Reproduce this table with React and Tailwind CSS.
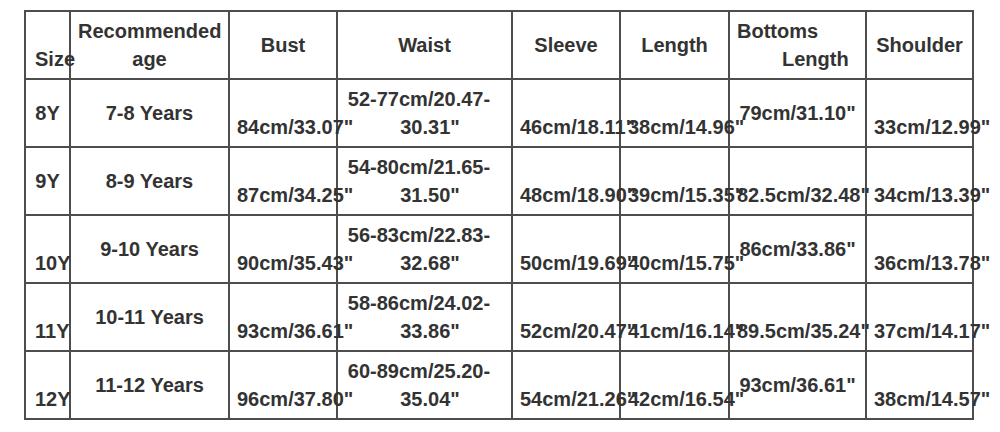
import React from 'react';

// c = centred in the cell, b = sits on the second line (as if a <br> came first)
const rows = [
    { size: ['8Y', 'c'], age: '7-8 Years', bust: '84cm/33.07"', waist: ['52-77cm/20.47-', '30.31"'], sleeve: '46cm/18.11"', length: '38cm/14.96"', bottoms: ['79cm/31.10"', 'c'], shoulder: '33cm/12.99"' },
    { size: ['9Y', 'c'], age: '8-9 Years', bust: '87cm/34.25"', waist: ['54-80cm/21.65-', '31.50"'], sleeve: '48cm/18.90"', length: '39cm/15.35"', bottoms: ['82.5cm/32.48"', 'b'], shoulder: '34cm/13.39"' },
    { size: ['10Y', 'b'], age: '9-10 Years', bust: '90cm/35.43"', waist: ['56-83cm/22.83-', '32.68"'], sleeve: '50cm/19.69"', length: '40cm/15.75"', bottoms: ['86cm/33.86"', 'c'], shoulder: '36cm/13.78"' },
    { size: ['11Y', 'b'], age: '10-11 Years', bust: '93cm/36.61"', waist: ['58-86cm/24.02-', '33.86"'], sleeve: '52cm/20.47"', length: '41cm/16.14"', bottoms: ['89.5cm/35.24"', 'b'], shoulder: '37cm/14.17"' },
    { size: ['12Y', 'b'], age: '11-12 Years', bust: '96cm/37.80"', waist: ['60-89cm/25.20-', '35.04"'], sleeve: '54cm/21.26"', length: '42cm/16.54"', bottoms: ['93cm/36.61"', 'c'], shoulder: '38cm/14.57"' },
];

const Cell = ({ low, left, narrow, children }) => (
    <div className={`border-r-2 border-b-2 border-[#4d4d4d] flex flex-col justify-center whitespace-nowrap ${narrow ? 'px-[9px]' : 'px-[7px]'} ${left ? 'text-left' : 'text-center'}`}>
        {low && <div className="h-7" />}
        {children}
    </div>
);

const App = () => {
    return (
        <div className="w-[1000px] h-[432px] bg-white pt-[10px] pl-[24px] font-['Liberation_Sans',Arial,sans-serif] font-bold text-[20px] leading-[28px] text-[#333]">
            <div className="inline-grid grid-cols-[45px_159px_108px_175px_108px_109px_137px_107px] auto-rows-[68px] border-l-2 border-t-2 border-[#4d4d4d]">
                <Cell low narrow>Size</Cell>
                <Cell><div>Recommended</div><div>age</div></Cell>
                <Cell>Bust</Cell>
                <Cell>Waist</Cell>
                <Cell>Sleeve</Cell>
                <Cell>Length</Cell>
                <Cell left><div>Bottoms</div><div className="pl-[45px]">Length</div></Cell>
                <Cell>Shoulder</Cell>

                {rows.map(r => (
                    <React.Fragment key={r.size[0]}>
                        <Cell low={r.size[1] === 'b'} narrow>{r.size[0]}</Cell>
                        <Cell>{r.age}</Cell>
                        <Cell low>{r.bust}</Cell>
                        <Cell>
                            <div className="pr-[11px]">{r.waist[0]}</div>
                            <div className="pl-[11px]">{r.waist[1]}</div>
                        </Cell>
                        <Cell low>{r.sleeve}</Cell>
                        <Cell low>{r.length}</Cell>
                        <Cell low={r.bottoms[1] === 'b'}>{r.bottoms[0]}</Cell>
                        <Cell low>{r.shoulder}</Cell>
                    </React.Fragment>
                ))}
            </div>
        </div>
    );
};

export default App;
